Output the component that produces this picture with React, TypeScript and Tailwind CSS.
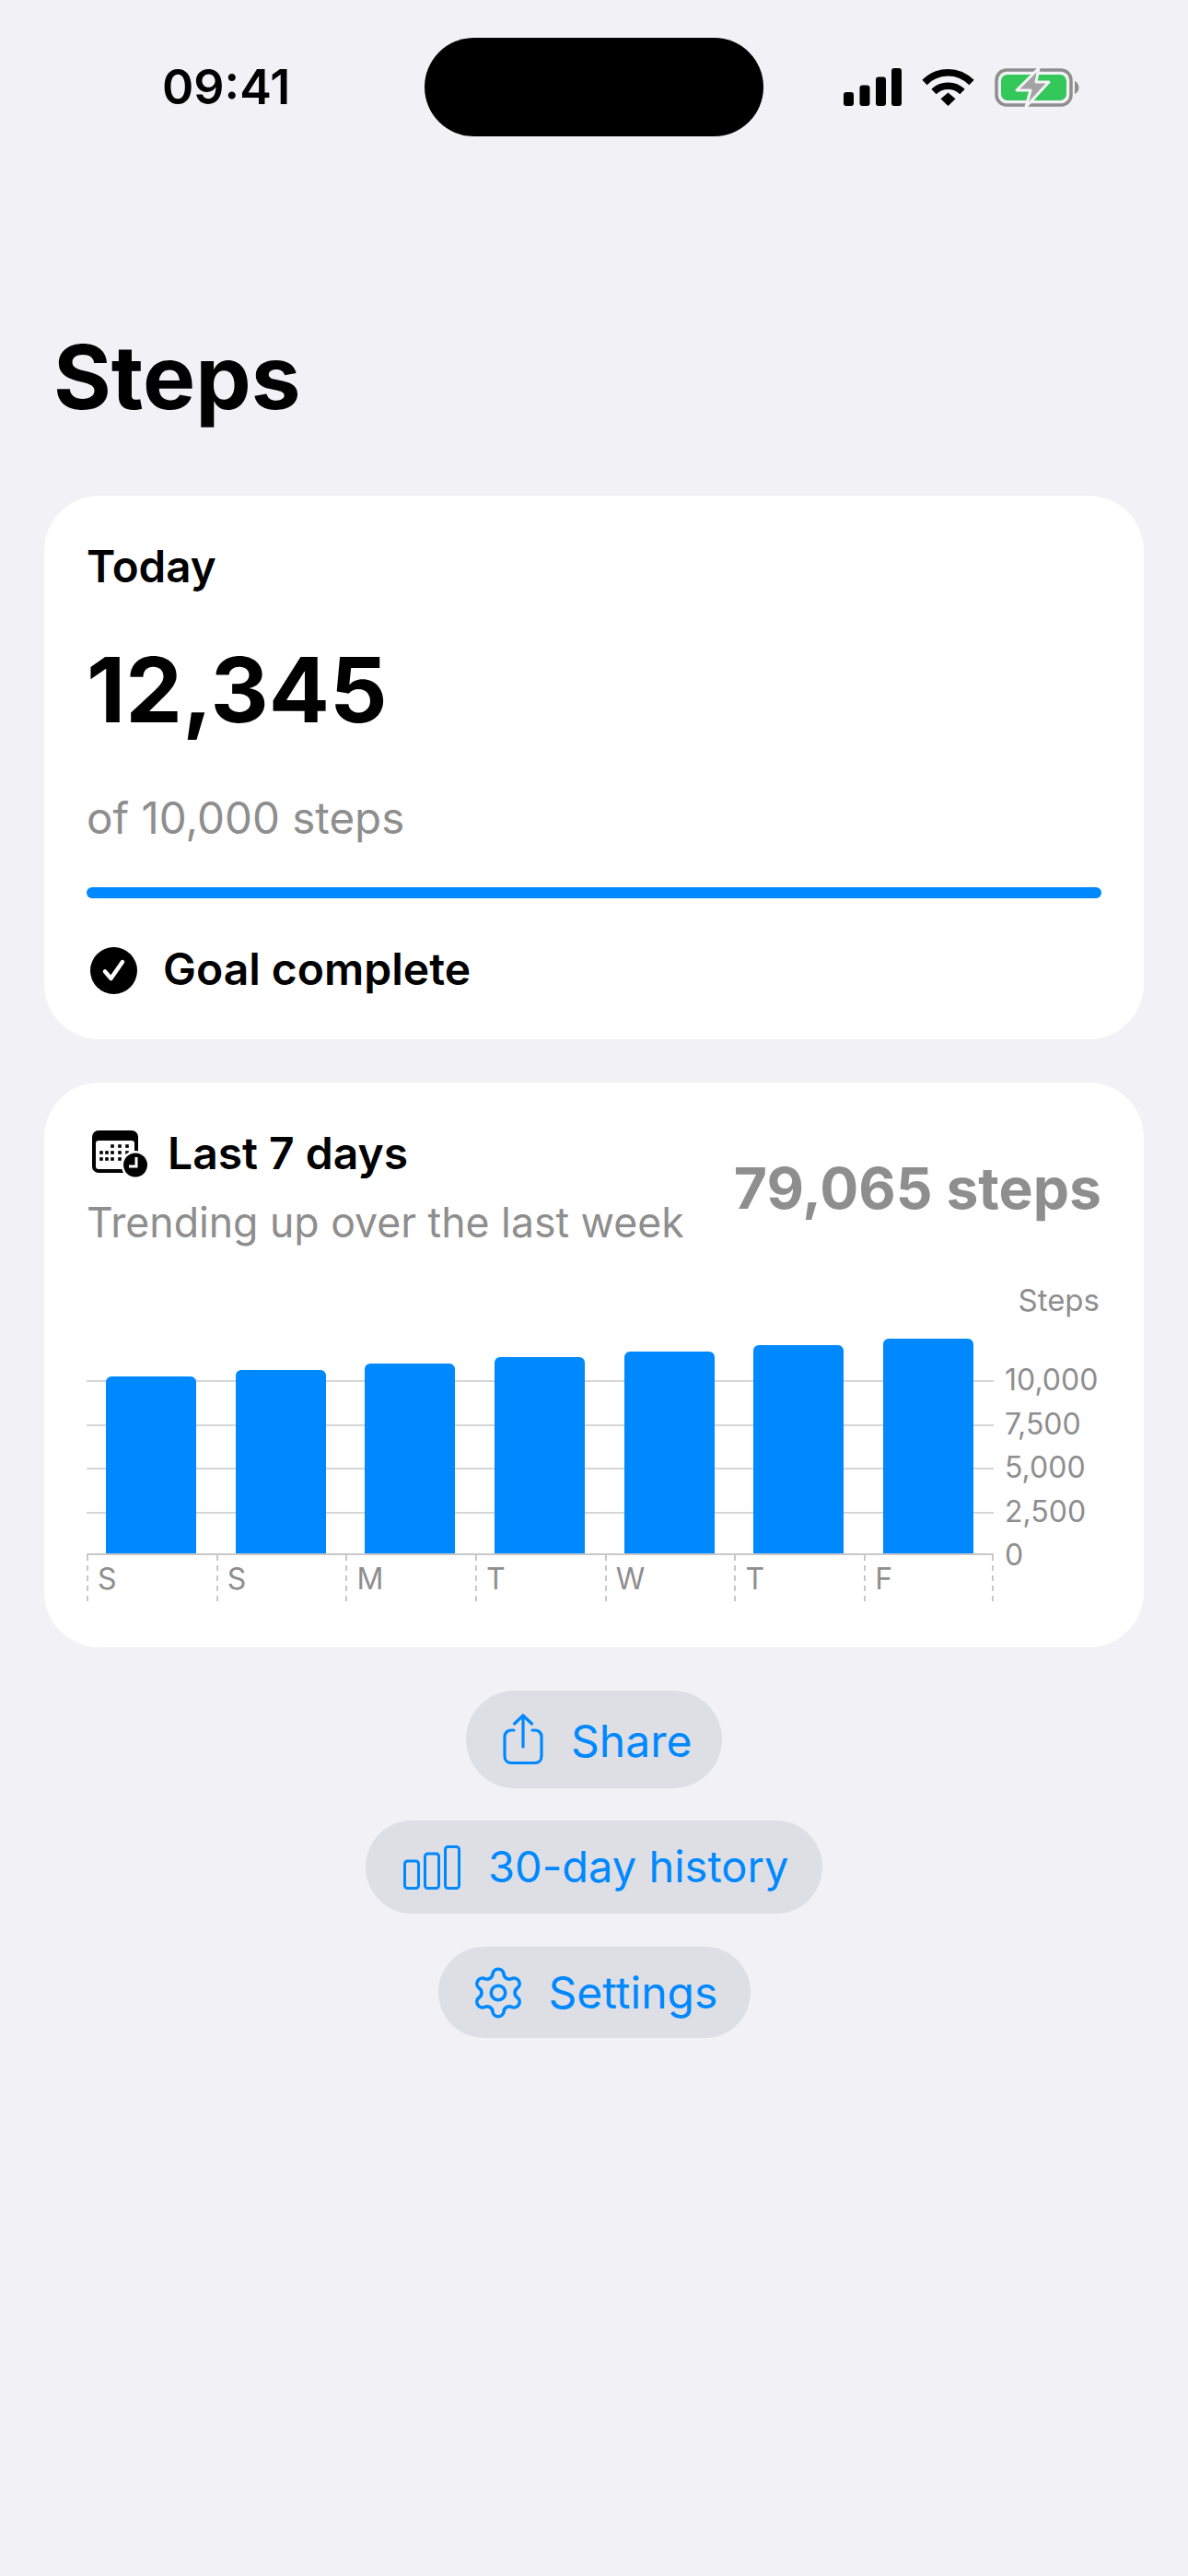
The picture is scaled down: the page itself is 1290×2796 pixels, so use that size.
import { Settings } from "lucide-react";

const days = [
  { label: "S", value: 10158 },
  { label: "S", value: 10530 },
  { label: "M", value: 10895 },
  { label: "T", value: 11260 },
  { label: "W", value: 11580 },
  { label: "T", value: 11950 },
  { label: "F", value: 12345 },
];

const axisLabels = ["10,000", "7,500", "5,000", "2,500", "0"];

function SignalIcon() {
  return (
    <svg width="63" height="41" viewBox="0 0 63 41" fill="#000">
      <rect x="0" y="26" width="11" height="15" rx="3" />
      <rect x="17.5" y="18.5" width="11" height="22.5" rx="3" />
      <rect x="35" y="9.5" width="11" height="31.5" rx="3" />
      <rect x="52" y="0" width="11" height="41" rx="3" />
    </svg>
  );
}

function WifiIcon() {
  return (
    <svg width="57" height="41" viewBox="0 0 57 41" fill="none" stroke="#000" strokeWidth="7.5">
      <path d="M3 15.5C17.5 1 39.5 1 54 15.5" />
      <path d="M13 25.5C21.5 17 35.5 17 44 25.5" />
      <path d="M20.5 33.2L28.5 26.5L36.5 33.2L28.5 41Z" fill="#000" stroke="none" />
    </svg>
  );
}

function BatteryIcon() {
  return (
    <svg width="92" height="44" viewBox="0 0 92 44" fill="none">
      <rect x="2" y="3" width="81" height="38" rx="11" stroke="#8e8e8e" strokeWidth="3.5" />
      <rect x="7" y="8" width="71" height="28" rx="7" fill="#34c759" />
      <path d="M87 15C90 16.5 91.5 19 91.5 22C91.5 25 90 27.5 87 29Z" fill="#8e8e8e" />
      <path
        d="M48 1L24 25H39L34 43L59 16H45Z"
        fill="#a3a3a3"
        stroke="#f4f4f6"
        strokeWidth="3"
        strokeLinejoin="round"
      />
    </svg>
  );
}

function CheckCircleIcon() {
  return (
    <svg width="51" height="51" viewBox="0 0 51 51" className="shrink-0">
      <circle cx="25.5" cy="25.5" r="25.5" fill="#000" />
      <path
        d="M16 26.5L22.5 34L35 16"
        fill="none"
        stroke="#fff"
        strokeWidth="4.5"
        strokeLinecap="round"
        strokeLinejoin="round"
      />
    </svg>
  );
}

function CalendarClockIcon() {
  const dots = [
    [24, 20], [32, 20], [40, 20],
    [12, 27], [18, 27], [24, 27], [32, 27], [40, 27],
    [12, 34], [18, 34], [24, 34], [32, 34],
  ];
  return (
    <svg width="64" height="56" viewBox="0 0 64 56" className="shrink-0">
      <rect x="2" y="3" width="50" height="46" rx="7" fill="#000" />
      <rect x="6" y="14" width="42" height="31" rx="3" fill="#fff" />
      {dots.map(([x, y]) => (
        <rect key={`${x}-${y}`} x={x - 1.8} y={y - 1.8} width="3.6" height="3.6" fill="#000" />
      ))}
      <circle cx="49" cy="40.5" r="15.5" fill="#fff" />
      <circle cx="49" cy="40.5" r="13" fill="#000" />
      <path d="M50 32V42H42" fill="none" stroke="#fff" strokeWidth="3" />
    </svg>
  );
}

function ShareIcon() {
  return (
    <svg width="44" height="56" viewBox="0 0 44 56" fill="none" stroke="#0088ff" strokeWidth="3.2" strokeLinecap="round" strokeLinejoin="round">
      <path d="M12 18H9C5 18 2 21 2 25V46C2 50.500 5 53.500 9 53.500H35C39 53.500 42 50.500 42 46V25C42 21 39 18 35 18H32" />
      <path d="M22 36V2" />
      <path d="M12.500 11L22 2L31.500 11" />
    </svg>
  );
}

function HistoryIcon() {
  return (
    <svg width="62" height="48" viewBox="0 0 62 48" fill="none" stroke="#0088ff" strokeWidth="3">
      <rect x="1.500" y="17" width="15" height="29.500" rx="3" />
      <rect x="23.500" y="9" width="15" height="37.500" rx="3" />
      <rect x="45.500" y="1.500" width="15" height="45" rx="3" />
    </svg>
  );
}

export default function App() {
  return (
    <div className="w-full min-h-screen bg-[#f1f1f6] text-black font-['Inter',sans-serif]">
      {/* Status bar */}
      <div className="flex items-center pt-[41px] pl-[176px]">
        <p className="w-[285px] text-[52px] leading-[107px] font-semibold">09:41</p>
        <div className="w-[368px] h-[107px] rounded-full bg-black"></div>
        <div className="flex items-center ml-[87px]">
          <SignalIcon />
          <div className="ml-[22px]">
            <WifiIcon />
          </div>
          <div className="ml-[22px]">
            <BatteryIcon />
          </div>
        </div>
      </div>

      {/* Title */}
      <h1 className="mt-[206px] pl-[58px] text-[96px] leading-[110px] font-bold">Steps</h1>

      {/* Today */}
      <div className="mx-[48px] mt-[74px] bg-white rounded-[60px] pt-[51px] px-[46px] pb-[47px] flex flex-col">
        <p className="text-[47.500px] leading-[52px] font-semibold">Today</p>
        <p className="mt-[53px] text-[98px] leading-[110px] font-bold">12,345</p>
        <p className="mt-[56px] text-[47.500px] leading-[56px] text-[#8e8e8e]">of 10,000 steps</p>
        <div className="mt-[47px] h-[12px] rounded-full bg-[#0088ff]"></div>
        <div className="mt-[50px] flex items-center gap-[28px] pl-[4px]">
          <CheckCircleIcon />
          <p className="pb-[3px] text-[48px] leading-[53px] font-semibold">Goal complete</p>
        </div>
      </div>

      {/* Last 7 days */}
      <div className="mx-[48px] mt-[47px] bg-white rounded-[60px] pt-[50px] px-[46px] pb-[50px]">
        <div className="flex items-center justify-between">
          <div>
            <div className="flex items-center gap-[20px] h-[54px] pl-[4px]">
              <CalendarClockIcon />
              <p className="text-[48px] leading-[54px] font-semibold">Last 7 days</p>
            </div>
            <p className="mt-[20px] text-[44.600px] leading-[56px] text-[#8e8e8e]">Trending up over the last week</p>
          </div>
          <p className="text-[62.400px] leading-[70px] font-bold text-[#8e8e8e]">79,065 steps</p>
        </div>

        <p className="mt-[38px] pr-[2px] text-right text-[33px] leading-[36px] text-[#8e8e8e]">Steps</p>
        <div className="mt-[1px] flex h-[258px]">
          <div className="relative w-[985px] pt-[68px]">
            {[0, 1, 2, 3].map((line) => (
              <div key={line} className="h-[47.5px] border-t-2 border-[#d6d6d6]"></div>
            ))}
            <div className="absolute inset-0 flex items-end border-b-2 border-[#c8c8c8]">
              {days.map((day, index) => (
                <div key={index} className="w-[140.7px] pl-[21px] pr-[21.7px]">
                  <div
                    className="w-full bg-[#0088ff] rounded-t-[6px]"
                    style={{ height: `${day.value * 0.0189}px` }}
                  ></div>
                </div>
              ))}
            </div>
          </div>
          <div className="ml-[12px] mt-[44px] h-[214px]">
            {axisLabels.map((label) => (
              <p key={label} className="h-[47.5px] text-[32px] leading-[47.5px] text-[#8e8e8e]">
                {label}
              </p>
            ))}
          </div>
        </div>
        <div className="flex w-[985px] h-[50px]">
          {days.map((day, index) => (
            <div
              key={index}
              className={`w-[140.7px] pl-[10px] pt-[8px] border-l-2 border-dashed border-[#c8c8c8] text-[32px] leading-[36px] text-[#8e8e8e] ${
                index === days.length - 1 ? "border-r-2" : ""
              }`}
            >
              {day.label}
            </div>
          ))}
        </div>
      </div>

      {/* Buttons */}
      <div className="mt-[47px] flex flex-col items-center text-[48px] text-[#0088ff]">
        <button className="h-[106px] w-[278px] rounded-full bg-[#dedfe4] flex items-center gap-[30px] pl-[40px]">
          <ShareIcon />
          <span className="pt-[3px]">Share</span>
        </button>
        <button className="mt-[35px] h-[101px] w-[496px] rounded-full bg-[#dedfe4] flex items-center gap-[30px] pl-[41px]">
          <HistoryIcon />
          <span className="text-[47px]">30-day history</span>
        </button>
        <button className="mt-[36px] h-[99px] w-[339px] rounded-full bg-[#dedfe4] flex items-center gap-[24px] pl-[34px]">
          <Settings size={62} strokeWidth={1.4} />
          <span>Settings</span>
        </button>
      </div>
    </div>
  );
}
